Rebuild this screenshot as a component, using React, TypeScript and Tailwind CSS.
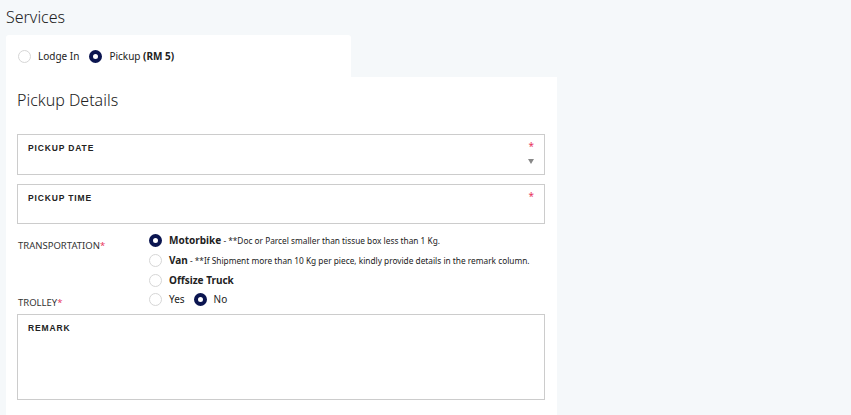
const Radio = ({ checked }: { checked?: boolean }) => {
    return checked ? (
        <span className="block w-[13px] h-[13px] rounded-full border-[4px] border-[#0b1550] bg-white shrink-0" />
    ) : (
        <span className="block w-[13px] h-[13px] rounded-full border border-[#d6d6d6] bg-white shrink-0" />
    );
};

const FieldBox = ({ label, height, caret }: { label: string; height: string; caret?: boolean }) => {
    return (
        <div className={`relative border border-[#cccccc] bg-white ${height}`}>
            <div
                className="absolute left-[10px] top-[7px] text-[8.5px] font-bold tracking-[0.1em] text-[#222]"
                style={{ fontFamily: '"Liberation Sans", Arial, sans-serif' }}
            >
                {label}
            </div>
            {label !== "REMARK" && (
                <div className="absolute right-[10px] top-[6px] text-[10px] leading-none text-[#e8365d]">*</div>
            )}
            {caret && (
                <div className="absolute right-[10px] top-[24px] w-0 h-0 border-l-[3px] border-r-[3px] border-t-[5px] border-l-transparent border-r-transparent border-t-[#888]" />
            )}
        </div>
    );
};

const App = () => {
    return (
        <div
            className="min-h-[415px] w-full bg-[#f5f8fa] pl-[6px] text-[#222]"
            style={{ fontFamily: '"Noto Sans", "Open Sans", sans-serif' }}
        >
            {/* Page title */}
            <div className="h-[35px] flex items-center text-[16px] font-light text-[#222] pb-[1px]">
                Services
            </div>

            {/* Service choice */}
            <div className="w-[345px] h-[42px] bg-white rounded-t-[3px] flex items-center pl-[12px] text-[10px]">
                <Radio />
                <span className="ml-[7px]">Lodge In</span>
                <span className="ml-[10px]"><Radio checked /></span>
                <span className="ml-[7px]">
                    Pickup <strong className="font-bold">(RM 5)</strong>
                </span>
            </div>

            {/* Pickup details card */}
            <div className="w-[551px] bg-white pb-[20px]">
                <div className="h-[45px] flex items-center pl-[11px] text-[16px] font-light">
                    Pickup Details
                </div>

                <div className="pl-[11px] pr-[12px] pt-[12px] flex flex-col">
                    <FieldBox label="PICKUP DATE" height="h-[41px]" caret />
                    <div className="h-[9px]" />
                    <FieldBox label="PICKUP TIME" height="h-[40px]" />

                    {/* Transportation */}
                    <div className="flex mt-[6px] text-[8.3px] whitespace-nowrap">
                        <div className="w-[132px] pl-[1px] pt-[9px] text-[9.5px] text-[#333]">
                            TRANSPORTATION<span className="text-[#e8365d]">*</span>
                        </div>
                        <div className="flex flex-col">
                            <div className="h-[20px] flex items-center">
                                <Radio checked />
                                <span className="ml-[7px]">
                                    <strong className="text-[10px]">Motorbike</strong> - **Doc or Parcel smaller than tissue box less than 1 Kg.
                                </span>
                            </div>
                            <div className="h-[20px] flex items-center">
                                <Radio />
                                <span className="ml-[7px]">
                                    <strong className="text-[10px]">Van</strong> - **If Shipment more than 10 Kg per piece, kindly provide details in the remark column.
                                </span>
                            </div>
                            <div className="h-[20px] flex items-center">
                                <Radio />
                                <strong className="ml-[7px] text-[10px]">Offsize Truck</strong>
                            </div>
                        </div>
                    </div>

                    {/* Trolley */}
                    <div className="flex text-[10px]">
                        <div className="w-[132px] pl-[1px] pt-[6px] text-[9.5px] text-[#333]">
                            TROLLEY<span className="text-[#e8365d]">*</span>
                        </div>
                        <div className="h-[18px] flex items-center">
                            <Radio />
                            <span className="ml-[7px]">Yes</span>
                            <span className="ml-[9px]"><Radio checked /></span>
                            <span className="ml-[7px]">No</span>
                        </div>
                    </div>

                    <div className="h-[4px]" />
                    <FieldBox label="REMARK" height="h-[86px]" />
                </div>
            </div>
        </div>
    );
};

export default App;
